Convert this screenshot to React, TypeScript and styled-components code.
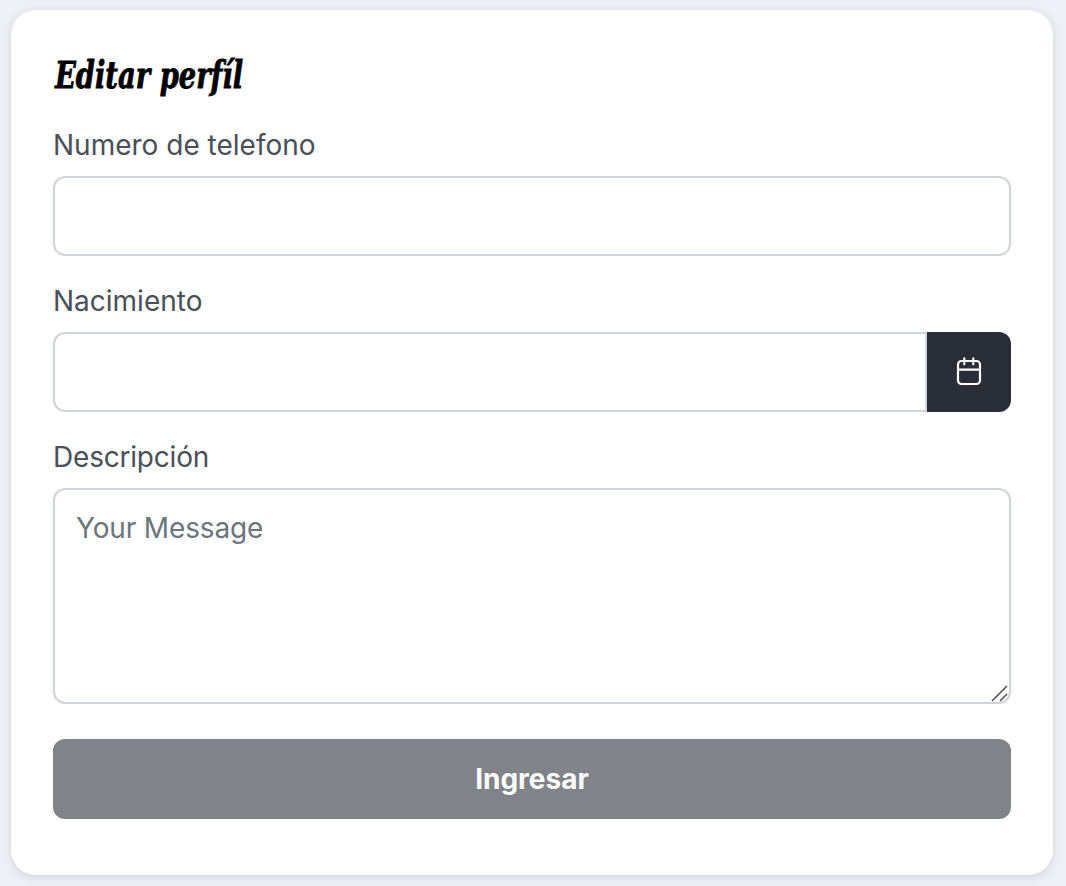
import React from "react";
import styled, { createGlobalStyle, css } from "styled-components";

const GlobalStyle = createGlobalStyle`
  *, *::before, *::after { box-sizing: border-box; }
  body {
    margin: 0;
    background: #edf0f5;
    font-family: Inter, "Liberation Sans", sans-serif;
    font-size: 28px;
    overflow: hidden;
  }
`;

const Page = styled.main`
  height: 886px;
  padding: 10px 13px 11px 11px;
`;

const Card = styled.form`
  height: 865px;
  padding: 43px 42px 0;
  border-radius: 25px;
  background: #fff;
  box-shadow: 0 2px 8px rgba(33, 37, 41, 0.14);
  display: flex;
  flex-direction: column;
`;

const Title = styled.h1`
  margin: 0 0 0 2px;
  height: 73px;
  width: max-content;
  font: italic 700 38px/44px "DejaVu Serif Condensed", "DejaVu Serif", serif;
  font-stretch: condensed;
  color: #000;
  -webkit-text-stroke: 0.8px #000;
  white-space: nowrap;
  transform: scaleX(0.8);
  transform-origin: 0 0;
`;

const Field = styled.div`
  display: flex;
  flex-direction: column;
  margin-bottom: 26px;
`;

const Label = styled.label<{ $tracking?: number }>`
  height: 50px;
  line-height: 38px;
  letter-spacing: ${(p) => p.$tracking ?? 0}px;
  color: #495057;
`;

const control = css`
  width: 100%;
  border: 2px solid #ced4da;
  border-radius: 12px;
  background: #fff;
  font: inherit;
  color: #495057;
  outline: none;
`;

const Input = styled.input<{ $joined?: boolean }>`
  ${control}
  height: 80px;
  padding: 0 22px;
  ${(p) => p.$joined && "flex: 1; min-width: 0; border-radius: 12px 0 0 12px;"}
`;

const InputGroup = styled.div`
  display: flex;
`;

const DateButton = styled.button`
  display: flex;
  align-items: center;
  justify-content: center;
  width: 84px;
  height: 80px;
  padding: 0 0 2px;
  border: 0;
  border-radius: 0 12px 12px 0;
  background: #292d36;
  color: #fff;
`;

const TextAreaWrap = styled.div`
  position: relative;
  height: 216px;
`;

const TextArea = styled.textarea`
  ${control}
  display: block;
  height: 216px;
  padding: 17px 21px;
  line-height: 42px;
  letter-spacing: -0.15px;
  resize: none;
  &::placeholder { color: #6c757d; opacity: 1; }
`;

const Grip = styled.svg`
  position: absolute;
  right: 2px;
  bottom: 1px;
`;

const Submit = styled.button`
  height: 80px;
  margin-top: 9px;
  padding: 0;
  border: 0;
  border-radius: 12px;
  background: #808387;
  color: #fff;
  font: inherit;
  font-weight: 700;
`;

const CalendarIcon = () => (
  <svg width="28" height="30" viewBox="0 0 28 30" fill="none" stroke="currentColor" strokeWidth="2.2" strokeLinecap="round">
    <rect x="3" y="5" width="22" height="23" rx="3.5" />
    <path d="M3 13.7h22M9.3 2.3v6M18.3 2.3v6" />
  </svg>
);

export default function App() {
  return (
    <>
      <GlobalStyle />
      <Page>
        <Card>
          <Title>Editar perfíl</Title>
          <Field>
            <Label htmlFor="phone">Numero de telefono</Label>
            <Input id="phone" />
          </Field>
          <Field>
            <Label htmlFor="birth">Nacimiento</Label>
            <InputGroup>
              <Input id="birth" $joined />
              <DateButton type="button" aria-label="Calendario">
                <CalendarIcon />
              </DateButton>
            </InputGroup>
          </Field>
          <Field>
            <Label htmlFor="about" $tracking={-0.2}>Descripción</Label>
            <TextAreaWrap>
              <TextArea id="about" placeholder="Your Message" />
              <Grip width="18" height="18" viewBox="0 0 18 18" fill="none" stroke="#555" strokeWidth="1.6">
                <path d="M1 16L16 1M9 16l7-7" />
              </Grip>
            </TextAreaWrap>
          </Field>
          <Submit type="submit">Ingresar</Submit>
        </Card>
      </Page>
    </>
  );
}
